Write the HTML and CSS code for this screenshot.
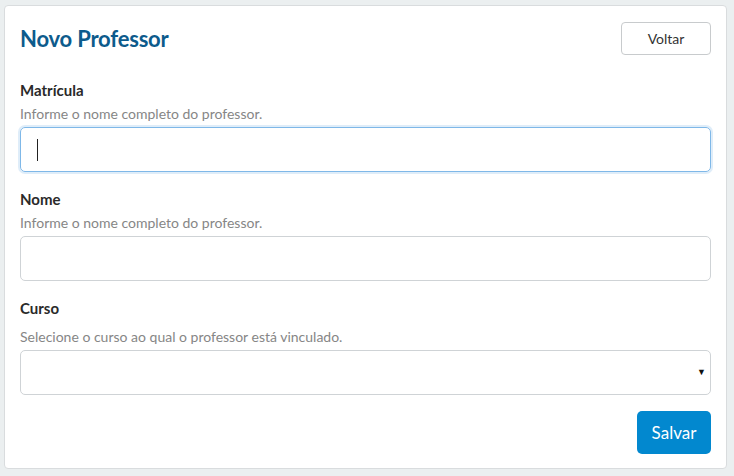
FILE: index.html
```html
<!DOCTYPE html>
<html lang="pt">
<head>
<meta charset="utf-8">
<link rel="stylesheet" href="styles.css">
</head>
<body>
<div class="card">
  <div class="header">
    <h1 class="title">Novo Professor</h1>
    <button class="btn btn-outline">Voltar</button>
  </div>
  <div class="group">
    <label class="label">Matrícula</label>
    <div class="help">Informe o nome completo do professor.</div>
    <div class="input focus"><span class="caret"></span></div>
  </div>
  <div class="group">
    <label class="label">Nome</label>
    <div class="help">Informe o nome completo do professor.</div>
    <div class="input"></div>
  </div>
  <div class="group">
    <label class="label label-curso">Curso</label>
    <div class="help">Selecione o curso ao qual o professor está vinculado.</div>
    <div class="input select"><span class="arrow">▼</span></div>
  </div>
  <div class="actions">
    <button class="btn btn-primary">Salvar</button>
  </div>
</div>
</body>
</html>
```
FILE: styles.css
```css
html, body { margin: 0; padding: 0; }
body {
  background: #ebeff0;
  padding: 5px 7px 7px 4px;
  font-family: Lato, "Open Sans", sans-serif;
  box-sizing: border-box;
  height: 476px;
}
.card {
  background: #fff;
  border: 1px solid #d9dcde;
  border-radius: 4px;
  padding: 15px 15px 14px 15px;
  height: 464px;
  box-sizing: border-box;
}
.header {
  display: flex;
  justify-content: space-between;
  align-items: center;
  height: 34px;
}
.title {
  margin: 0;
  font-size: 22px;
  font-weight: 700;
  color: #0d5b8c;
  letter-spacing: -0.2px;
}
.btn {
  font-family: inherit;
  font-size: 14px;
  border-radius: 4px;
  cursor: pointer;
}
.btn-outline {
  width: 90px;
  height: 33px;
  background: #fff;
  border: 1px solid #c8cbcd;
  color: #333;
}
.group {
  display: flex;
  flex-direction: column;
}
.label {
  font-size: 15px;
  font-weight: 700;
  color: #2a2a2a;
  height: 20px;
  line-height: 20px;
  margin-top: 17px;
}
.header + .group .label { margin-top: 25px; }
.label-curso { margin-bottom: 9px; }
.help {
  font-size: 14px;
  color: #868686;
  height: 20px;
  line-height: 20px;
  margin-top: 4px;
  margin-bottom: 3px;
}
.label-curso + .help { margin-top: 0; margin-bottom: 3px; }
.input {
  height: 45px;
  box-sizing: border-box;
  border: 1px solid #cfd3d6;
  border-radius: 5px;
  position: relative;
}
.input.focus {
  border-color: #7fb8e8;
  box-shadow: 0 0 0 2px rgba(128, 184, 232, 0.25);
}
.caret {
  position: absolute;
  left: 16px;
  top: 11px;
  width: 1px;
  height: 22px;
  background: #222;
}
.select .arrow {
  position: absolute;
  right: 4px;
  top: 15px;
  font-size: 9px;
  color: #111;
}
.actions {
  display: flex;
  justify-content: flex-end;
  margin-top: 16px;
}
.btn-primary {
  width: 74px;
  height: 43px;
  background: #0288cf;
  border: none;
  color: #fff;
  font-size: 17px;
  font-weight: 400;
  border-radius: 5px;
}
```
